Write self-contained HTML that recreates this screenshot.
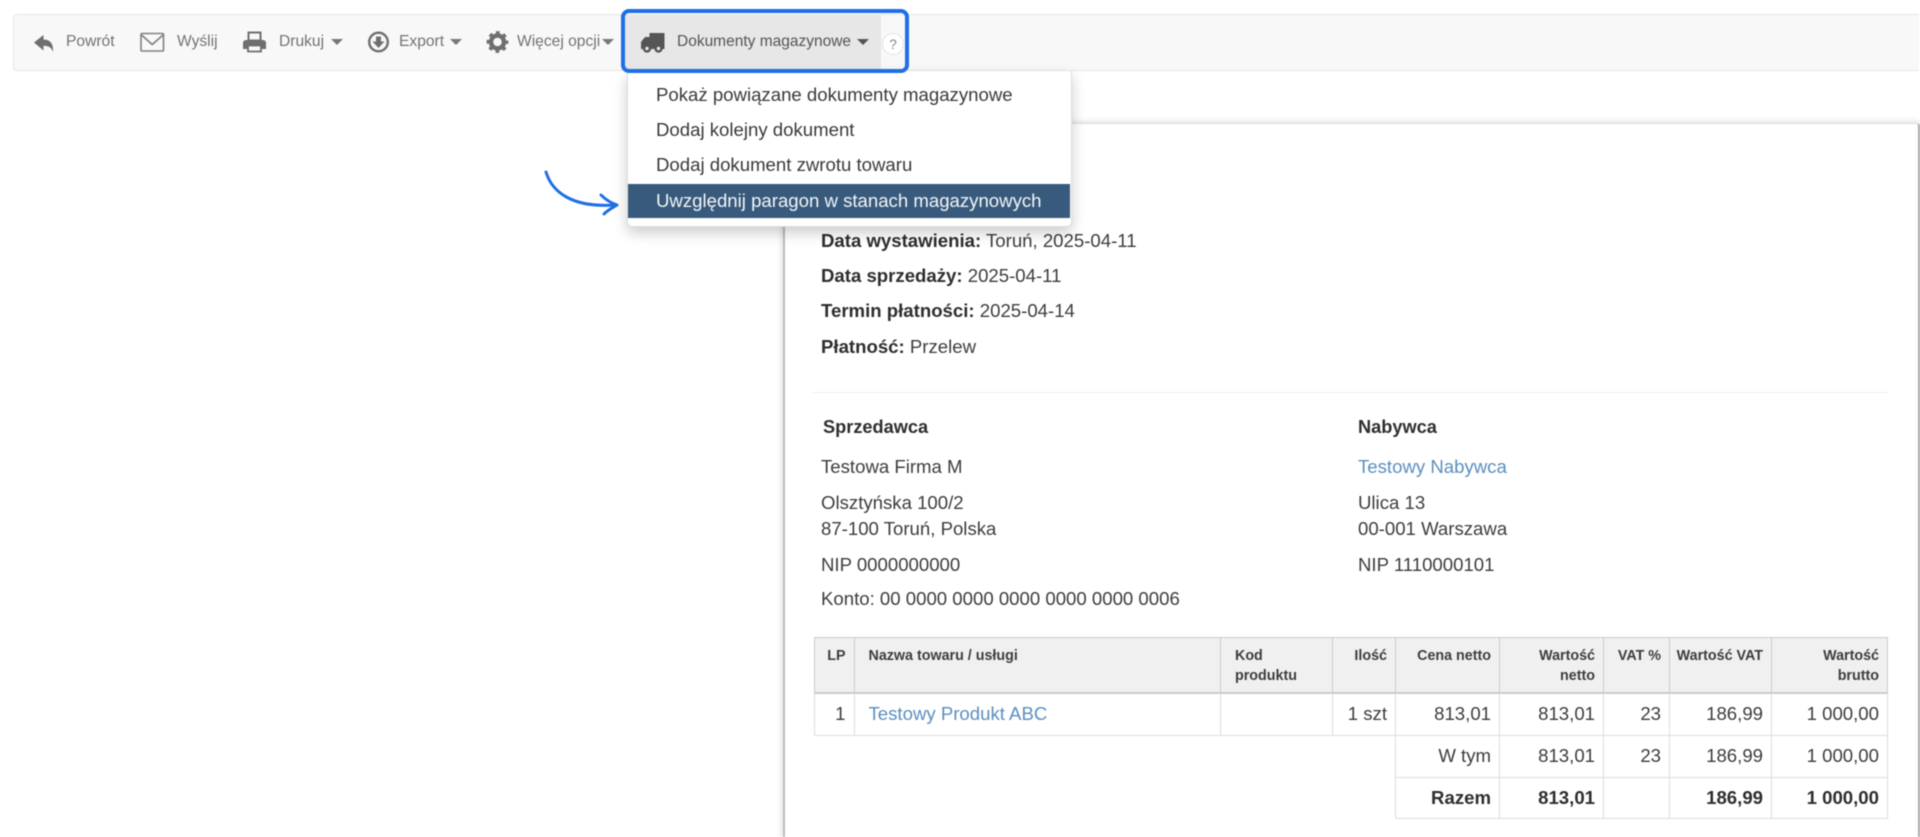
<!DOCTYPE html>
<html lang="pl"><head><meta charset="utf-8"><title>Dokument</title>
<style>
html,body{margin:0;padding:0;background:#fff;width:1920px;height:837px;overflow:hidden}
body{font-family:"Liberation Sans",Arial,sans-serif;color:#333}
#root{position:relative;width:1920px;height:837px;overflow:hidden;filter:blur(.45px)}
.a{position:absolute;white-space:nowrap;line-height:20px}
#bar{position:absolute;left:13px;top:14px;width:1905px;height:55px;background:#f8f8f8;border:1px solid #e7e7e7;border-right:0;border-radius:4px 0 0 4px}
.t{font-size:15.6px;color:#737373;top:32px}
.caret{position:absolute;width:0;height:0;border-left:6px solid transparent;border-right:6px solid transparent;border-top:6px solid #777;top:38.5px}
#active{position:absolute;left:625px;top:15px;width:256px;height:54px;background:#e7e7e7}
#help{position:absolute;left:882px;top:33px;width:20px;height:20px;border-radius:50%;background:#fff;border:1px solid #e4e4e4;font-size:14px;line-height:21px;text-align:center;color:#888}
#focus{position:absolute;left:621px;top:9px;width:280px;height:56px;border:4px solid #1e6fe6;border-radius:8px}
#paper{position:absolute;left:782.5px;top:123px;width:1133.5px;height:714px;background:#fff;border-left:2px solid #bdbdbd;border-right:2px solid #a9a9a9;border-top:1px solid #ddd;border-radius:3px 3px 0 0;box-shadow:0 0 8px rgba(0,0,0,.18);box-sizing:content-box}
#hr{position:absolute;left:813px;top:392px;width:1075px;height:1px;background:#eee}
#menu{position:absolute;left:627px;top:71px;width:443px;height:155px;background:#fff;border:1px solid #ddd;border-top:0;border-radius:0 0 5px 5px;box-shadow:0 6px 14px rgba(0,0,0,.2)}
.m{font-size:18.6px;color:#3a3a3a;left:656px}
#sel{position:absolute;left:628px;top:184px;width:442px;height:34px;background:#385a7c}
.b{font-size:18.6px;color:#3d3d3d}
b{color:#2e2e2e}
.l{color:#5b8fbe}
.h{font-size:18.2px;font-weight:bold;color:#2e2e2e}
table{position:absolute;left:814px;top:637px;border-collapse:collapse;table-layout:fixed;width:1073px;font-size:18.6px;color:#3d3d3d}
td,th{padding:0 8px;text-align:right;border:1px solid #ddd;vertical-align:middle;line-height:20px;overflow:hidden;white-space:nowrap}
td{padding-bottom:1px}
th{font-size:14.3px;background:#f0f0f0;vertical-align:top;padding-top:8px;padding-bottom:0;border-color:#ccc;border-bottom-width:2px;color:#3d3d3d;box-sizing:border-box}
.x{border:0;background:#fff}
.left{text-align:left;padding-left:14px}
</style></head><body><div id="root">

<div id="bar"></div>
<div id="active"></div>
<div id="help">?</div>

<svg class="a" style="left:0;top:0" width="1920" height="120" viewBox="0 0 1920 120" fill="#6f6f6f">
<path d="M34 42.5L43.5 35V39.5C50.5 39.5 53.5 44 53 52C51.5 47.500 48.500 45.800 43.500 45.800V50.500Z"/>
<g fill="none" stroke="#808080" stroke-width="1.600"><rect x="141" y="33.500" width="22.500" height="17.500" rx="1"/><path d="M141.500 35L152.200 44.500L163 35"/></g>
<path d="M243 43a3 3 0 0 1 3-3h17a3 3 0 0 1 3 3v6h-23z"/><rect x="248.500" y="32.500" width="12" height="8" fill="none" stroke="#6f6f6f" stroke-width="2"/><rect x="248" y="45.500" width="13" height="6" fill="#f8f8f8" stroke="#6f6f6f" stroke-width="1.800"/>
<circle cx="378.500" cy="42" r="9.300" fill="none" stroke="#6f6f6f" stroke-width="2.400"/><path d="M376 36.500h5v5h3.500l-6 6.500-6-6.500H376z"/>
<circle cx="497.500" cy="42" r="6.500" fill="none" stroke="#6f6f6f" stroke-width="4.500"/><circle cx="497.500" cy="42" r="9.400" fill="none" stroke="#6f6f6f" stroke-width="3" stroke-dasharray="3.690 3.690" stroke-dashoffset="1.800"/>
<g fill="#555"><path d="M649.500 33h15v16h-15z"/><path d="M641 42l4-5h5v12h-9z"/><circle cx="647" cy="48.500" r="4.200"/><circle cx="658.500" cy="48.500" r="4.200"/></g><circle cx="647" cy="48.500" r="1.700" fill="#e7e7e7"/><circle cx="658.500" cy="48.500" r="1.700" fill="#e7e7e7"/>
</svg>

<div class="a t" style="left:66px">Powrót</div>
<div class="a t" style="left:177px">Wyślij</div>
<div class="a t" style="left:279px">Drukuj</div><div class="caret" style="left:331px"></div>
<div class="a t" style="left:399px">Export</div><div class="caret" style="left:450px"></div>
<div class="a t" style="left:517px">Więcej opcji</div><div class="caret" style="left:602px"></div>
<div class="a t" style="left:677px;color:#555;font-size:15.5px">Dokumenty magazynowe</div><div class="caret" style="left:857px;border-top-color:#555"></div>

<div id="paper"></div>
<div id="hr"></div>

<div class="a b" style="left:821px;top:231px"><b>Data wystawienia:</b> Toruń, 2025-04-11</div>
<div class="a b" style="left:821px;top:266px"><b>Data sprzedaży:</b> 2025-04-11</div>
<div class="a b" style="left:821px;top:301px"><b>Termin płatności:</b> 2025-04-14</div>
<div class="a b" style="left:821px;top:337px"><b>Płatność:</b> Przelew</div>

<div class="a h" style="left:823px;top:417px">Sprzedawca</div>
<div class="a b" style="left:821px;top:457px">Testowa Firma M</div>
<div class="a b" style="left:821px;top:493px">Olsztyńska 100/2</div>
<div class="a b" style="left:821px;top:519px">87-100 Toruń, Polska</div>
<div class="a b" style="left:821px;top:554.500px">NIP 0000000000</div>
<div class="a b" style="left:821px;top:589px">Konto: 00 0000 0000 0000 0000 0000 0006</div>

<div class="a h" style="left:1358px;top:417px">Nabywca</div>
<div class="a b l" style="left:1358px;top:457px">Testowy Nabywca</div>
<div class="a b" style="left:1358px;top:493px">Ulica 13</div>
<div class="a b" style="left:1358px;top:519px">00-001 Warszawa</div>
<div class="a b" style="left:1358px;top:554.500px">NIP 1110000101</div>

<table>
<colgroup><col style="width:39.500px"><col style="width:366.500px"><col style="width:112px"><col style="width:63px"><col style="width:104px"><col style="width:104px"><col style="width:66px"><col style="width:102px"><col style="width:116px"></colgroup>
<tr style="height:55px">
<th style="text-align:right">LP</th><th class="left">Nazwa towaru / usługi</th><th class="left">Kod<br>produktu</th><th>Ilość</th><th>Cena netto</th><th>Wartość<br>netto</th><th>VAT %</th><th style="padding-left:0">Wartość VAT</th><th>Wartość<br>brutto</th></tr>
<tr style="height:43px"><td>1</td><td class="left l">Testowy Produkt ABC</td><td></td><td>1 szt</td><td>813,01</td><td>813,01</td><td>23</td><td>186,99</td><td>1 000,00</td></tr>
<tr style="height:42px"><td class="x" colspan="4"></td><td>W tym</td><td>813,01</td><td>23</td><td>186,99</td><td>1 000,00</td></tr>
<tr style="height:41px"><td class="x" colspan="4"></td><td><b>Razem</b></td><td><b>813,01</b></td><td></td><td><b>186,99</b></td><td><b>1 000,00</b></td></tr>
</table>

<div id="menu"></div>
<div id="sel"></div>
<div class="a m" style="top:85px">Pokaż powiązane dokumenty magazynowe</div>
<div class="a m" style="top:120px">Dodaj kolejny dokument</div>
<div class="a m" style="top:155px">Dodaj dokument zwrotu towaru</div>
<div class="a m" style="top:191px;color:#f2f5f8">Uwzględnij paragon w stanach magazynowych</div>

<div id="focus"></div>

<svg class="a" style="left:530px;top:160px" width="100" height="70" viewBox="530 160 100 70" fill="none" stroke="#1e6fe6" stroke-width="3" stroke-linecap="round" stroke-linejoin="round">
<path d="M546 172C552 192 572 208 615 205"/><path d="M601 195C606 200 611 203 617 205C612 208 608 210 604 214"/>
</svg>
</div></body></html>
